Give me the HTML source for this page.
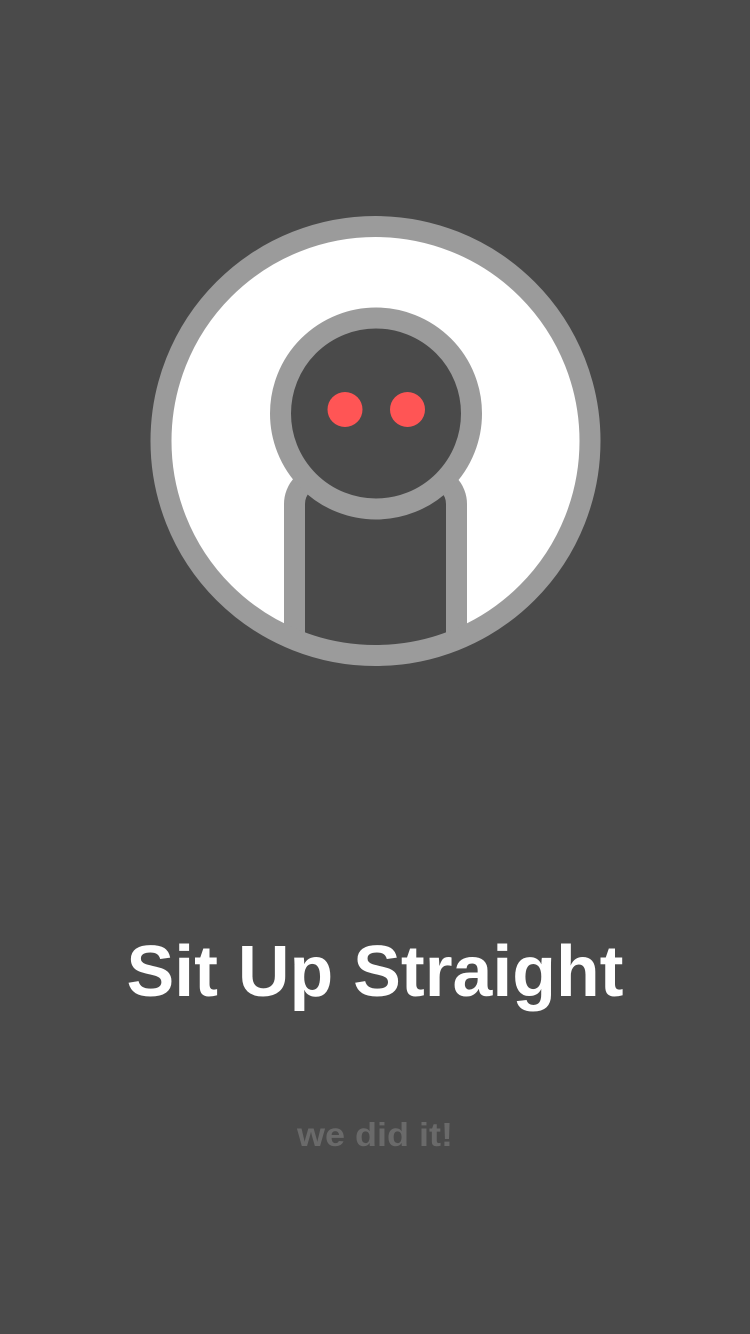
<!DOCTYPE html>
<html><head><meta charset="utf-8"><style>
html,body{margin:0;padding:0;background:#4a4a4a;}
svg{display:block}
</style></head><body>
<svg width="750" height="1334" viewBox="0 0 750 1334" xmlns="http://www.w3.org/2000/svg">
<rect width="750" height="1334" fill="#4a4a4a"/>
<defs><clipPath id="c"><circle cx="375.5" cy="441" r="205"/></clipPath></defs>
<circle cx="375.5" cy="441" r="205" fill="#fff"/>
<g clip-path="url(#c)">
<rect x="294.5" y="476" width="162" height="260" rx="28" fill="#4a4a4a" stroke="#9b9b9b" stroke-width="21"/>
</g>
<circle cx="375.5" cy="441" r="214.5" fill="none" stroke="#9b9b9b" stroke-width="21"/>
<circle cx="376" cy="413.5" r="95.5" fill="#4a4a4a" stroke="#9b9b9b" stroke-width="21"/>
<circle cx="345" cy="409.5" r="17.5" fill="#ff5555"/>
<circle cx="407.5" cy="409.5" r="17.5" fill="#ff5555"/>
<text x="375" y="996" text-anchor="middle" font-family="Liberation Sans, sans-serif" font-weight="bold" font-size="72" fill="#fff" textLength="497" lengthAdjust="spacingAndGlyphs">Sit Up Straight</text>
<text x="375" y="1146" text-anchor="middle" font-family="Liberation Sans, sans-serif" font-weight="bold" font-size="33" fill="#6a6a6a" textLength="156" lengthAdjust="spacingAndGlyphs">we did it!</text>
</svg>
</body></html>
